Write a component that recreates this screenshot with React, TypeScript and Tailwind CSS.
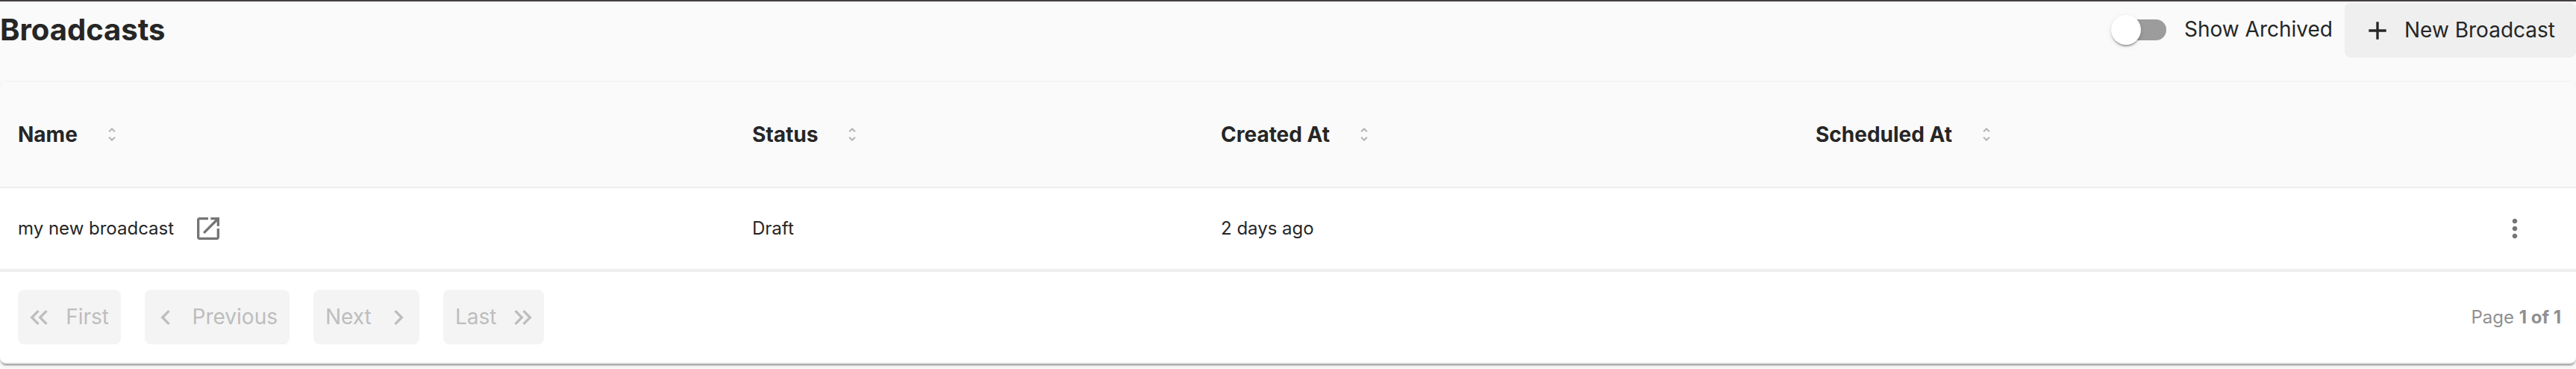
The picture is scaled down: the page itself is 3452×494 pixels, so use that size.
import React from "react";

const paths = {
  add: "M19 13h-6v6h-2v-6H5v-2h6V5h2v6h6z",
  open: "M19 19H5V5h7V3H5c-1.11 0-2 .9-2 2v14c0 1.1.89 2 2 2h14c1.1 0 2-.9 2-2v-7h-2zM14 3v2h3.59l-9.83 9.83 1.41 1.41L19 6.41V10h2V3z",
  more: "M12 8c1.1 0 2-.9 2-2s-.9-2-2-2-2 .9-2 2 .9 2 2 2m0 2c-1.1 0-2 .9-2 2s.9 2 2 2 2-.9 2-2-.9-2-2-2m0 6c-1.1 0-2 .9-2 2s.9 2 2 2 2-.9 2-2-.9-2-2-2",
  sort: "M12 5.83 15.17 9l1.41-1.41L12 3 7.41 7.59 8.83 9zm0 12.34L8.83 15l-1.41 1.41L12 21l4.59-4.59L15.17 15z",
  first: "M17.59 18 19 16.59 14.42 12 19 7.41 17.59 6l-6 6zM11 18l1.41-1.41L7.83 12l4.58-4.59L11 6l-6 6z",
  prev: "M15.41 7.41 14 6l-6 6 6 6 1.41-1.41L10.83 12z",
  next: "M10 6 8.59 7.41 13.17 12l-4.58 4.59L10 18l6-6z",
  last: "M6.41 6 5 7.41 9.58 12 5 16.59 6.41 18l6-6zM13 6l-1.41 1.41L16.17 12l-4.58 4.59L13 18l6-6z",
};

function Icon({ name, className = "size-10" }: { name: keyof typeof paths; className?: string }) {
  return (
    <svg viewBox="0 0 24 24" fill="currentColor" className={`shrink-0 ${className}`}>
      <path d={paths[name]} />
    </svg>
  );
}

const columns = [
  { label: "Name", width: "w-[984px]" },
  { label: "Status", width: "w-[628px]" },
  { label: "Created At", width: "w-[797px]" },
  { label: "Scheduled At", width: "w-[893px]" },
];

function PageButton({ label, icon, trailing, width }: { label: string; icon: keyof typeof paths; trailing?: boolean; width: string }) {
  return (
    <button
      disabled
      className={`flex h-[73px] items-center justify-between rounded-lg bg-[#f4f4f4] text-[28px] text-[#bdbdbd] ${width} ${trailing ? "flex-row-reverse pl-4 pr-2" : "pl-2 pr-4"}`}
    >
      <Icon name={icon} />
      <span className="pb-0.5 whitespace-nowrap">{label}</span>
    </button>
  );
}

export default function App() {
  return (
    <div className="h-[494px] w-[3452px] overflow-hidden border-t-2 border-[#444041] bg-[#fafafa] font-['Inter',sans-serif] text-[#262626]">
      <header className="flex h-[108px] items-start justify-between">
        <h1 className="pt-[14px] text-[40px] leading-[47px] font-bold">Broadcasts</h1>
        <div className="flex items-start pt-[2px]">
          <div className="mt-4 flex h-10 w-[74px] shrink-0 items-center rounded-full">
            <div className="z-10 -mr-[34px] size-10 shrink-0 rounded-full bg-white shadow-[0_4px_2px_-2px_rgba(0,0,0,0.2),0_2px_2px_0_rgba(0,0,0,0.14),0_2px_6px_0_rgba(0,0,0,0.12)]" />
            <div className="h-7 w-[68px] shrink-0 rounded-full bg-[#9c9c9c]" />
          </div>
          <span className="mt-[15px] ml-6 w-[215px] whitespace-nowrap text-[28px] leading-10">Show Archived</span>
          <button className="flex h-[73px] w-[310px] items-center rounded-lg bg-[#efefef] pl-6 text-[28px]">
            <Icon name="add" />
            <span className="ml-4 pb-0.5 whitespace-nowrap">New Broadcast</span>
          </button>
        </div>
      </header>

      <section className="h-[377px] overflow-hidden rounded-[8px] border-b-2 border-[#eeeeee] bg-white shadow-[0_4px_2px_-2px_rgba(0,0,0,0.2),0_2px_2px_0_rgba(0,0,0,0.14),0_2px_6px_0_rgba(0,0,0,0.12)]">
        <div className="flex h-[142px] items-center border-b-2 border-[#eeeeee] bg-[#fafafa]">
          {columns.map((c) => (
            <div key={c.label} className={`flex items-center pl-6 ${c.width}`}>
              <span className="text-[28px] leading-10 font-bold">{c.label}</span>
              <Icon name="sort" className="ml-[34px] size-6 text-[#b3b3b3]" />
            </div>
          ))}
        </div>
        <div className="flex h-[112px] items-center border-b-4 border-[#eeeeee] text-[24px]">
          <div className="flex w-[984px] items-center pl-6">
            <span>my new broadcast</span>
            <Icon name="open" className="ml-[26px] size-10 text-[#757575]" />
          </div>
          <div className="w-[628px] pl-6">Draft</div>
          <div className="w-[797px] pl-6">2 days ago</div>
          <div className="w-[893px]" />
          <button className="ml-12 text-[#757575]">
            <Icon name="more" />
          </button>
        </div>
        <footer className="flex h-[121px] items-center justify-between pr-5 pl-6">
          <nav className="flex gap-8">
            <PageButton label="First" icon="first" width="w-[138px]" />
            <PageButton label="Previous" icon="prev" width="w-[194px]" />
            <PageButton label="Next" icon="next" trailing width="w-[142px]" />
            <PageButton label="Last" icon="last" trailing width="w-[135px]" />
          </nav>
          <p className="text-[24px] text-[#909090]">
            Page <b className="font-bold">1 of 1</b>
          </p>
        </footer>
      </section>
    </div>
  );
}
